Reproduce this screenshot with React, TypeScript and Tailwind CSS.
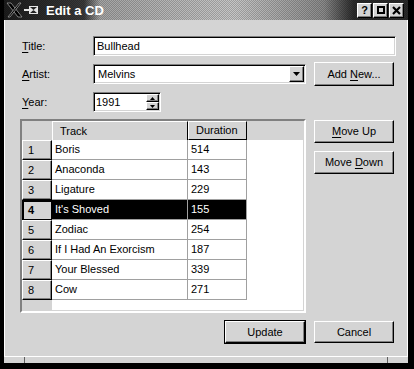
import React from "react";

const raised =
  "border border-t-white border-l-white border-r-black border-b-black shadow-[inset_-1px_-1px_0_#808080]";
const sunken =
  "border border-t-[#808080] border-l-[#808080] border-r-white border-b-white shadow-[inset_1px_1px_0_#000,inset_-1px_-1px_0_#d4d4d4]";

function U({ c }: { c: string }) {
  return <span className="underline underline-offset-[2px] decoration-1">{c}</span>;
}

function Btn({ children, w = "w-[80px]", h = "h-[23px]" }: { children: React.ReactNode; w?: string; h?: string }) {
  return (
    <div className={`${w} ${h} ${raised} bg-[#d4d4d4] flex items-center justify-center`}>
      <span className="whitespace-pre">{children}</span>
    </div>
  );
}

export default function App() {
  const rows: [string, string][] = [
    ["Boris", "514"],
    ["Anaconda", "143"],
    ["Ligature", "229"],
    ["It's Shoved", "155"],
    ["Zodiac", "254"],
    ["If I Had An Exorcism", "187"],
    ["Your Blessed", "339"],
    ["Cow", "271"],
  ];
  return (
    <div className="w-[414px] h-[369px] bg-black flex flex-col pl-[4px] pr-[6px] pb-[6px] font-['Liberation_Sans',Arial,sans-serif] text-[11px] leading-none text-black overflow-hidden">
      {/* title bar */}
      <div className="relative h-[20px] flex items-center pr-[4px] bg-[linear-gradient(to_right,#1c1c1c_0px,#3a3a3a_80px,#a4a4a4_96px,#c6c6c6_230px,#8a8a8a_320px,#2a2a2a_350px)]">
        <div className="absolute inset-0 bg-[repeating-conic-gradient(rgba(0,0,0,0.2)_0_25%,transparent_0_50%)] bg-[length:2px_2px]" />
        <svg width="34" height="16" viewBox="0 0 34 16" className="relative ml-[2px]">
          <polygon points="1,1 5,1 16,15 12,15" fill="#000" stroke="#9a9a9a" strokeWidth="0.8" />
          <polygon points="13,1 15,1 4,15 2,15" fill="#000" stroke="#9a9a9a" strokeWidth="0.8" />
          <rect x="18" y="7" width="5" height="2" fill="#e6e6e6" />
          <rect x="23.5" y="4.5" width="8" height="7" fill="none" stroke="#e6e6e6" />
          <polygon points="24,5 31,11 31,5 24,11" fill="#e6e6e6" />
        </svg>
        <span className="relative ml-[6px] text-white font-bold text-[13px]">Edit a CD</span>
        <div className="relative ml-auto flex gap-[1px]">
          <div className={`w-[15px] h-[15px] ${raised} bg-[#d4d4d4] flex items-center justify-center font-bold text-[11px]`}>?</div>
          <div className={`w-[15px] h-[15px] ${raised} bg-[#d4d4d4] flex items-center justify-center`}>
            <div className="w-[8px] h-[8px] border-2 border-black" />
          </div>
          <div className={`w-[15px] h-[15px] ${raised} bg-[#d4d4d4] flex items-center justify-center`}>
            <svg width="9" height="9" viewBox="0 0 9 9">
              <path d="M1 1 L8 8 M8 1 L1 8" stroke="#000" strokeWidth="2.2" />
            </svg>
          </div>
        </div>
      </div>

      {/* client */}
      <div className="flex-1 bg-[#d4d4d4] border-l border-l-white border-r border-r-white pl-[15px] flex flex-col">
        {/* Title */}
        <div className="mt-[16px] flex items-center h-[20px]">
          <div className="w-[73px] pl-[2px]"><U c="T" />itle:</div>
          <div className={`w-[303px] h-[20px] ${sunken} bg-white flex items-center pl-[3px]`}>Bullhead</div>
        </div>
        {/* Artist */}
        <div className="mt-[6px] flex items-center h-[24px]">
          <div className="w-[73px] pl-[2px]"><U c="A" />rtist:</div>
          <div className={`w-[213px] h-[20px] ${sunken} bg-white flex items-center pl-[4px] pr-[1px]`}>
            <span>Melvins</span>
            <div className={`ml-auto w-[15px] h-[16px] ${raised} bg-[#d4d4d4] flex items-center justify-center`}>
              <svg width="7" height="4" viewBox="0 0 7 4"><polygon points="0,0 7,0 3.5,4" fill="#000" /></svg>
            </div>
          </div>
          <div className="ml-[8px]">
            <Btn h="h-[24px]">Add <U c="N" />ew...</Btn>
          </div>
        </div>
        {/* Year */}
        <div className="mt-[6px] flex items-center h-[20px]">
          <div className="w-[73px] pl-[2px]"><U c="Y" />ear:</div>
          <div className={`w-[68px] h-[20px] ${sunken} bg-white flex items-center pl-[2px] pr-[1px]`}>
            <span>1991</span>
            <div className="ml-auto flex flex-col">
              <div className={`w-[13px] h-[8px] ${raised} bg-[#d4d4d4] flex items-center justify-center`}>
                <svg width="5" height="3" viewBox="0 0 5 3"><polygon points="0,3 5,3 2.5,0" fill="#000" /></svg>
              </div>
              <div className={`w-[13px] h-[8px] ${raised} bg-[#d4d4d4] flex items-center justify-center`}>
                <svg width="5" height="3" viewBox="0 0 5 3"><polygon points="0,0 5,0 2.5,3" fill="#000" /></svg>
              </div>
            </div>
          </div>
        </div>
        {/* Table + side buttons */}
        <div className="mt-[7px] flex items-start">
          <div className={`w-[286px] h-[194px] ${sunken} border-2 bg-white flex flex-col overflow-hidden`}>
            {/* header */}
            <div className="h-[19px] flex bg-[#d4d4d4] shrink-0">
              <div className="w-[30px]" />
              <div className="w-[136px] border-r border-r-black flex items-center pl-[7px] border-l border-l-white border-t border-t-white">Track</div>
              <div className="w-[59px] border-r border-b border-r-black border-b-black border-l border-l-white border-t border-t-white flex items-center pl-[7px]">Duration</div>
              <div className="flex-1" />
            </div>
            {rows.map(([t, d], i) => {
              const sel = i === 3;
              return (
                <div key={i} className="h-[20px] flex shrink-0">
                  {sel ? (
                    <div className="w-[30px] bg-[#d4d4d4] border-t-2 border-l-2 border-r border-b border-black flex items-center pl-[4px] font-bold">{i + 1}</div>
                  ) : (
                    <div className={`w-[30px] bg-[#d4d4d4] ${raised} flex items-center pl-[5px]`}>{i + 1}</div>
                  )}
                  <div className={`w-[136px] border-r border-b border-[#a0a0a0] flex items-center pl-[3px] whitespace-pre ${sel ? "bg-black text-white" : ""}`}>{t}</div>
                  <div className={`w-[59px] border-r border-b border-[#a0a0a0] flex items-center pl-[3px] ${sel ? "bg-black text-white" : ""}`}>{d}</div>
                  <div className="flex-1" />
                </div>
              );
            })}
            <div className="flex-1 flex">
              <div className="w-[30px] bg-[#d4d4d4]" />
              <div className="flex-1" />
            </div>
          </div>
          <div className="ml-[8px] flex flex-col gap-[8px] pt-[1px]">
            <Btn><U c="M" />ove Up</Btn>
            <Btn>Move <U c="D" />own</Btn>
          </div>
        </div>
        {/* bottom buttons */}
        <div className="mt-[7px] flex items-center h-[24px]">
          <div className="ml-[204px] w-[82px] h-[24px] border border-black">
            <Btn w="w-full" h="h-full">Update</Btn>
          </div>
          <div className="ml-[8px]">
            <Btn h="h-[22px]">Cancel</Btn>
          </div>
        </div>
      </div>
      {/* bottom frame strip */}
      <div className="h-[7px] bg-[#d4d4d4] border-t border-t-white flex">
        <div className="w-[21px] border-r border-r-[#606060]" />
        <div className="w-[363px] border-r border-r-[#606060]" />
      </div>
    </div>
  );
}
